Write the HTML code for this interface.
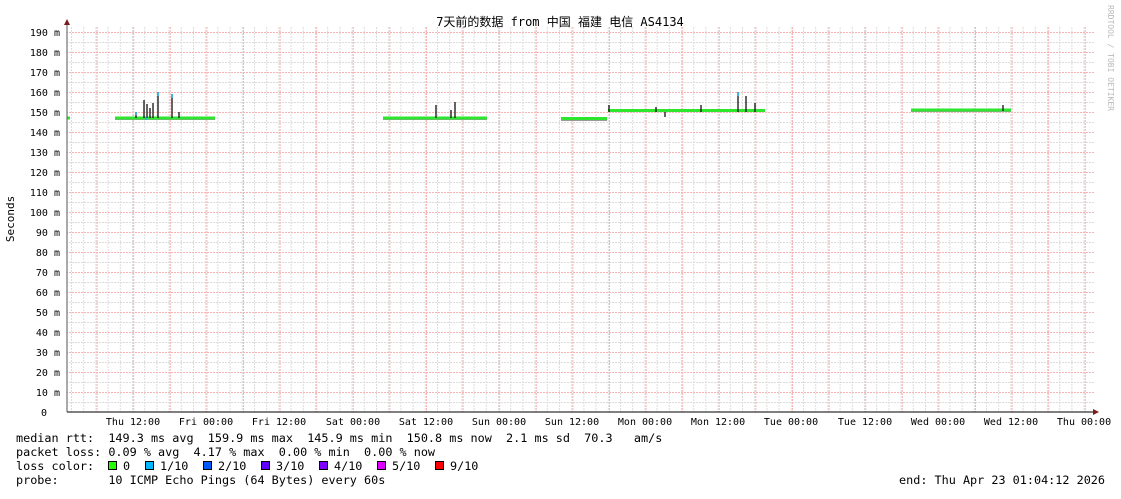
<!DOCTYPE html><html><head><style>
body{margin:0;background:#fff;width:1121px;height:494px;overflow:hidden}
.pre{white-space:pre}
</style></head><body>
<svg width="1121" height="494" xmlns="http://www.w3.org/2000/svg" font-family="DejaVu Sans Mono, Liberation Mono, monospace" font-size="10">
<defs>
<pattern id="gv" x="71" y="0" width="12.2" height="3" patternUnits="userSpaceOnUse"><rect x="0" y="0" width="1" height="2" fill="#dcdcdc"/></pattern>
<pattern id="gh" x="0" y="42" width="3" height="20" patternUnits="userSpaceOnUse"><rect x="0" y="0" width="2" height="1" fill="#dcdcdc"/></pattern>
<pattern id="rv" x="96.6" y="0" width="36.6" height="3" patternUnits="userSpaceOnUse"><rect x="0" y="0" width="1" height="2" fill="#f6b4b4"/></pattern>
<pattern id="rh" x="0" y="32" width="3" height="20" patternUnits="userSpaceOnUse"><rect x="0" y="0" width="2" height="1" fill="#f6b4b4"/></pattern>
</defs>
<rect x="67" y="26" width="1027" height="386" fill="url(#gv)"/>
<rect x="67" y="26" width="1027" height="386" fill="url(#gh)"/>
<rect x="67" y="26" width="1027" height="386" fill="url(#rh)"/>
<rect x="67" y="26" width="1027" height="386" fill="url(#rv)"/>
<g stroke="#999" stroke-width="2" fill="none">
<path d="M115 119H215M383 119H487M561 120H607M608 111H765M911 111H1011"/>
</g>
<g stroke="#2fe62f" stroke-width="3" fill="none">
<path d="M67 118H70M115 118H215M383 118H487M561 118.5H607M608 110.5H765M911 110H1011"/>
</g>
<g stroke="#111" stroke-width="1.3" fill="none">
<path d="M136 118V112M144 118V100M147 118V104M150 118V108M153 118V103M158 118V92M172 118V94M179 118V112M436 118V105M451 118V110M455 118V102M609 112V105M656 112V107M665 112V117M701 112V105M738 112V92M746 112V96M755 112V103M1003 111V105"/>
</g>
<g stroke="#1ab0f0" stroke-width="1.5"><path d="M158 92V96M172 94V98M738 92V96M146 117V120M136 112V115"/></g>
<line x1="67" y1="412" x2="1096" y2="412" stroke="#000"/>
<line x1="67" y1="412" x2="67" y2="22" stroke="#555"/>
<polygon points="64,25 70,25 67,19" fill="#7a1a1a"/>
<polygon points="1093,409 1093,415 1099,412" fill="#7a1a1a"/>
<g fill="#000" text-anchor="end">
<text x="60" y="36">190 m</text><text x="60" y="56">180 m</text><text x="60" y="76">170 m</text><text x="60" y="96">160 m</text><text x="60" y="116">150 m</text><text x="60" y="136">140 m</text><text x="60" y="156">130 m</text><text x="60" y="176">120 m</text><text x="60" y="196">110 m</text><text x="60" y="216">100 m</text><text x="60" y="236">90 m</text><text x="60" y="256">80 m</text><text x="60" y="276">70 m</text><text x="60" y="296">60 m</text><text x="60" y="316">50 m</text><text x="60" y="336">40 m</text><text x="60" y="356">30 m</text><text x="60" y="376">20 m</text><text x="60" y="396">10 m</text><text x="47" y="416">0</text>
</g>
<g fill="#000" text-anchor="middle">
<text x="133" y="425">Thu 12:00</text><text x="206" y="425">Fri 00:00</text><text x="279" y="425">Fri 12:00</text><text x="353" y="425">Sat 00:00</text><text x="426" y="425">Sat 12:00</text><text x="499" y="425">Sun 00:00</text><text x="572" y="425">Sun 12:00</text><text x="645" y="425">Mon 00:00</text><text x="718" y="425">Mon 12:00</text><text x="791" y="425">Tue 00:00</text><text x="865" y="425">Tue 12:00</text><text x="938" y="425">Wed 00:00</text><text x="1011" y="425">Wed 12:00</text><text x="1084" y="425">Thu 00:00</text>
</g>
<text x="560" y="26" text-anchor="middle" font-size="12" font-family="DejaVu Sans Mono, Noto Sans CJK SC, monospace">7天前的数据 from 中国 福建 电信 AS4134</text>
<text transform="translate(14,219) rotate(-90)" text-anchor="middle" font-size="11">Seconds</text>
<text transform="translate(1108,5) rotate(90)" font-size="8" fill="#bbb">RRDTOOL / TOBI OETIKER</text>
<g fill="#000" font-size="11.8" class="pre">
<text x="16" y="442" class="pre">median rtt:  149.3 ms avg  159.9 ms max  145.9 ms min  150.8 ms now  2.1 ms sd  70.3   am/s</text>
<text x="16" y="456" class="pre">packet loss: 0.09 % avg  4.17 % max  0.00 % min  0.00 % now</text>
<text x="16" y="470">loss color:</text>
<text x="123" y="470">0</text><text x="160" y="470">1/10</text><text x="218" y="470">2/10</text><text x="276" y="470">3/10</text><text x="334" y="470">4/10</text><text x="392" y="470">5/10</text><text x="450" y="470">9/10</text>
<text x="16" y="484" class="pre">probe:       10 ICMP Echo Pings (64 Bytes) every 60s</text>
<text x="1105" y="484" text-anchor="end">end: Thu Apr 23 01:04:12 2026</text>
</g>
<g stroke="#000" stroke-width="1">
<rect x="108.5" y="461.5" width="8" height="8" fill="#26ff00"/>
<rect x="145.5" y="461.5" width="8" height="8" fill="#00b8ff"/>
<rect x="203.5" y="461.5" width="8" height="8" fill="#0059ff"/>
<rect x="261.5" y="461.5" width="8" height="8" fill="#5e00ff"/>
<rect x="319.5" y="461.5" width="8" height="8" fill="#7e00ff"/>
<rect x="377.5" y="461.5" width="8" height="8" fill="#dd00ff"/>
<rect x="435.5" y="461.5" width="8" height="8" fill="#ff0000"/>
</g>
</svg>
</body></html>
